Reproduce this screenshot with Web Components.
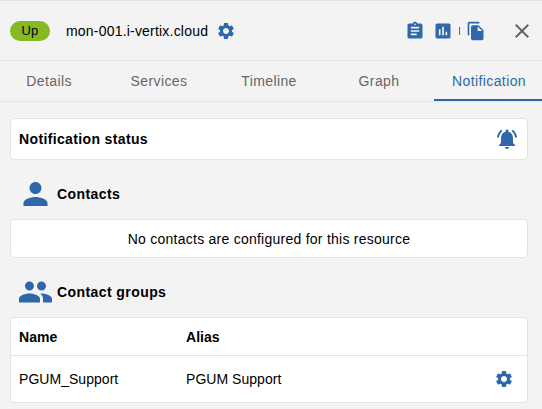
<!DOCTYPE html>
<html lang="en">
<head>
<meta charset="utf-8">
<title>Resource notification</title>
<style>
html, body { margin: 0; height: 100%; overflow: hidden; background: #f3f3f3; }
body { font: 14px/20px "Liberation Sans", Arial, sans-serif; color: #000; }
</style>
</head>
<body>
<resource-panel></resource-panel>
<script>
const ICONS = {
  gear: 'M19.14 12.94c.04-.3.06-.61.06-.94 0-.32-.02-.64-.07-.94l2.03-1.58c.18-.14.23-.41.12-.61l-1.92-3.32c-.12-.22-.37-.29-.59-.22l-2.39.96c-.5-.38-1.03-.7-1.62-.94l-.36-2.54c-.04-.24-.24-.41-.48-.41h-3.84c-.24 0-.43.17-.47.41l-.36 2.54c-.59.24-1.13.57-1.62.94l-2.39-.96c-.22-.08-.47 0-.59.22L2.74 8.87c-.12.21-.08.47.12.61l2.03 1.58c-.05.3-.09.63-.09.94s.02.64.07.94l-2.03 1.58c-.18.14-.23.41-.12.61l1.92 3.32c.12.22.37.29.59.22l2.39-.96c.5.38 1.03.7 1.62.94l.36 2.54c.05.24.24.41.48.41h3.84c.24 0 .44-.17.47-.41l.36-2.54c.59-.24 1.13-.56 1.62-.94l2.39.96c.22.08.47 0 .59-.22l1.92-3.32c.12-.22.07-.47-.12-.61l-2.01-1.58zM12 15.6c-1.98 0-3.6-1.62-3.6-3.6s1.62-3.6 3.6-3.6 3.6 1.62 3.6 3.6-1.62 3.6-3.6 3.6z',
  clipboard: 'M19 3h-4.18C14.4 1.84 13.3 1 12 1c-1.3 0-2.4.84-2.82 2H5c-1.1 0-2 .9-2 2v14c0 1.1.9 2 2 2h14c1.1 0 2-.9 2-2V5c0-1.1-.9-2-2-2zm-7 0c.55 0 1 .45 1 1s-.45 1-1 1-1-.45-1-1 .45-1 1-1zm2 14H7v-2h7v2zm3-4H7v-2h10v2zm0-4H7V7h10v2z',
  chart: 'M19 3H5c-1.1 0-2 .9-2 2v14c0 1.1.9 2 2 2h14c1.1 0 2-.9 2-2V5c0-1.1-.9-2-2-2zM9 17H7v-7h2v7zm4 0h-2V7h2v10zm4 0h-2v-4h2v4z',
  copy: 'M16 1H4c-1.1 0-2 .9-2 2v14h2V3h12V1zm-1 4l6 6v10c0 1.1-.9 2-2 2H7.99C6.89 23 6 22.1 6 21l.01-14c0-1.1.89-2 1.99-2h7zm-1 7h5.5L14 6.5V12z',
  close: 'M19 6.41L17.59 5 12 10.59 6.41 5 5 6.41 10.59 12 5 17.59 6.41 19 12 13.41 17.59 19 19 17.59 13.41 12z',
  bell: 'M7.58 4.08L6.15 2.65C3.75 4.48 2.17 7.3 2.03 10.5h2c.15-2.65 1.51-4.97 3.55-6.42zm12.39 6.42h2c-.15-3.2-1.73-6.02-4.12-7.85l-1.42 1.43c2.02 1.45 3.39 3.77 3.54 6.42zM18 11c0-3.07-1.64-5.64-4.5-6.32V4c0-.83-.67-1.5-1.5-1.5s-1.5.67-1.5 1.5v.68C7.63 5.36 6 7.92 6 11v5l-2 2v1h16v-1l-2-2v-5zm-6 11c.14 0 .27-.01.4-.04.65-.14 1.18-.58 1.44-1.18.1-.24.15-.5.15-.78h-4c.01 1.1.9 2 2.01 2z',
  person: 'M12 12c2.21 0 4-1.79 4-4s-1.79-4-4-4-4 1.79-4 4 1.79 4 4 4zm0 2c-2.67 0-8 1.34-8 4v2h16v-2c0-2.66-5.33-4-8-4z',
  people: 'M16 11c1.66 0 2.99-1.34 2.99-3S17.66 5 16 5c-1.66 0-3 1.34-3 3s1.34 3 3 3zm-8 0c1.66 0 2.99-1.34 2.99-3S9.66 5 8 5C6.34 5 5 6.34 5 8s1.34 3 3 3zm0 2c-2.33 0-7 1.17-7 3.5V19h14v-2.5c0-2.33-4.67-3.5-7-3.5zm8 0c-.29 0-.62.02-.97.05 1.16.84 1.97 1.97 1.97 3.45V19h6v-2.5c0-2.33-4.67-3.5-7-3.5z'
};

function define(name, html) {
  const template = document.createElement('template');
  template.innerHTML = html;
  customElements.define(name, class extends HTMLElement {
    connectedCallback() {
      if (this.shadowRoot) return;
      this.attachShadow({ mode: 'open' }).append(template.content.cloneNode(true));
    }
  });
}

class UiIcon extends HTMLElement {
  static observedAttributes = ['name'];
  constructor() {
    super();
    this.attachShadow({ mode: 'open' }).innerHTML = `<style>
      :host { display: block; flex: none; width: var(--size, 20px); height: var(--size, 20px); color: #2e68aa; }
      svg { display: block; width: 100%; height: 100%; fill: currentColor; }
      path { transform: translateX(var(--nudge, 0)); }
    </style><svg viewBox="0 0 24 24" aria-hidden="true"><path/></svg>`;
  }
  attributeChangedCallback(attr, old, value) {
    this.shadowRoot.querySelector('path').setAttribute('d', ICONS[value] || '');
  }
}
customElements.define('ui-icon', UiIcon);

define('status-chip', `<style>
  :host { display: block; width: 40px; height: 20px; border-radius: 10px; background: #88b922; text-align: center; font-size: 13px; line-height: 20px; letter-spacing: .2px; }
</style><slot></slot>`);

define('panel-header', `<style>
  :host { display: flex; align-items: center; height: 59px; padding: 0 8px 0 10px; border: solid #e3e3e3; border-width: 1px 0; }
  .name { margin: 0 8px 0 16px; width: 142px; white-space: nowrap; letter-spacing: .2px; }
  .actions { display: flex; align-items: center; margin-left: auto; }
  .actions ui-icon { margin-right: 8px; }
  .bar { width: 1px; height: 8px; background: #666; margin: 0 6px 0 -2px; }
  .actions ui-icon.copy { margin-right: 24px; }
  .actions ui-icon.close { --size: 24px; color: #666; margin: 0; }
</style>
<status-chip>Up</status-chip>
<span class="name"><slot></slot></span>
<ui-icon name="gear"></ui-icon>
<div class="actions">
  <ui-icon name="clipboard"></ui-icon><ui-icon name="chart"></ui-icon><span class="bar"></span>
  <ui-icon class="copy" name="copy"></ui-icon><ui-icon class="close" name="close"></ui-icon>
</div>`);

define('tab-item', `<style>
  :host { display: block; box-sizing: border-box; width: 110px; flex: none; height: 40px; text-align: center; line-height: 40px; color: #666; letter-spacing: .4px; }
  :host([selected]) { color: #2e68aa; border-bottom: 2px solid #2e68aa; }
</style><slot></slot>`);

define('tab-bar', `<style>
  :host { display: flex; justify-content: center; height: 40px; margin: 0 -2px 0 -6px; border-bottom: 1px solid #e3e3e3; }
</style><slot></slot>`);

define('ui-card', `<style>
  :host { display: block; box-sizing: border-box; background: #fff; border: 1px solid #e3e3e3; border-radius: 4px; }
</style><slot></slot>`);

define('section-title', `<style>
  :host { display: flex; align-items: center; gap: 4px; padding-left: 7px; font-weight: bold; letter-spacing: .42px; }
  ::slotted(ui-icon) { --size: 36px; --nudge: .33px; }
</style><slot name="icon"></slot><span><slot></slot></span>`);

define('group-table', `<style>
  :host { display: block; letter-spacing: .04px; }
  .row { display: grid; grid-template-columns: 167px 1fr 20px; align-items: center; padding: 0 13px 0 8px; height: 46px; }
  .head { height: 37px; border-bottom: 1px solid #e3e3e3; font-weight: bold; }
</style>
<div class="row head"><span>Name</span><span>Alias</span></div>
<div class="row"><span>PGUM_Support</span><span>PGUM Support</span><ui-icon name="gear"></ui-icon></div>`);

define('resource-panel', `<style>
  :host { display: block; overflow: hidden; height: 409px; }
  main { display: flex; flex-direction: column; padding: 16px 14px 0 10px; }
  .status { display: flex; justify-content: space-between; align-items: center; height: 42px; padding: 0 8px; font-weight: bold; letter-spacing: .36px; }
  .status ui-icon { --size: 24px; }
  section-title { height: 36px; margin: 16px 0 7px; }
  .empty { height: 39px; line-height: 38px; text-align: center; letter-spacing: .25px; }
  .table { height: 86px; }
</style>
<panel-header>mon-001.i-vertix.cloud</panel-header>
<tab-bar><tab-item>Details</tab-item><tab-item>Services</tab-item><tab-item>Timeline</tab-item><tab-item>Graph</tab-item><tab-item selected>Notification</tab-item></tab-bar>
<main>
  <ui-card class="status"><span>Notification status</span><ui-icon name="bell"></ui-icon></ui-card>
  <section-title><ui-icon slot="icon" name="person"></ui-icon>Contacts</section-title>
  <ui-card class="empty">No contacts are configured for this resource</ui-card>
  <section-title><ui-icon slot="icon" name="people"></ui-icon>Contact groups</section-title>
  <ui-card class="table"><group-table></group-table></ui-card>
</main>`);
</script>
</body>
</html>
